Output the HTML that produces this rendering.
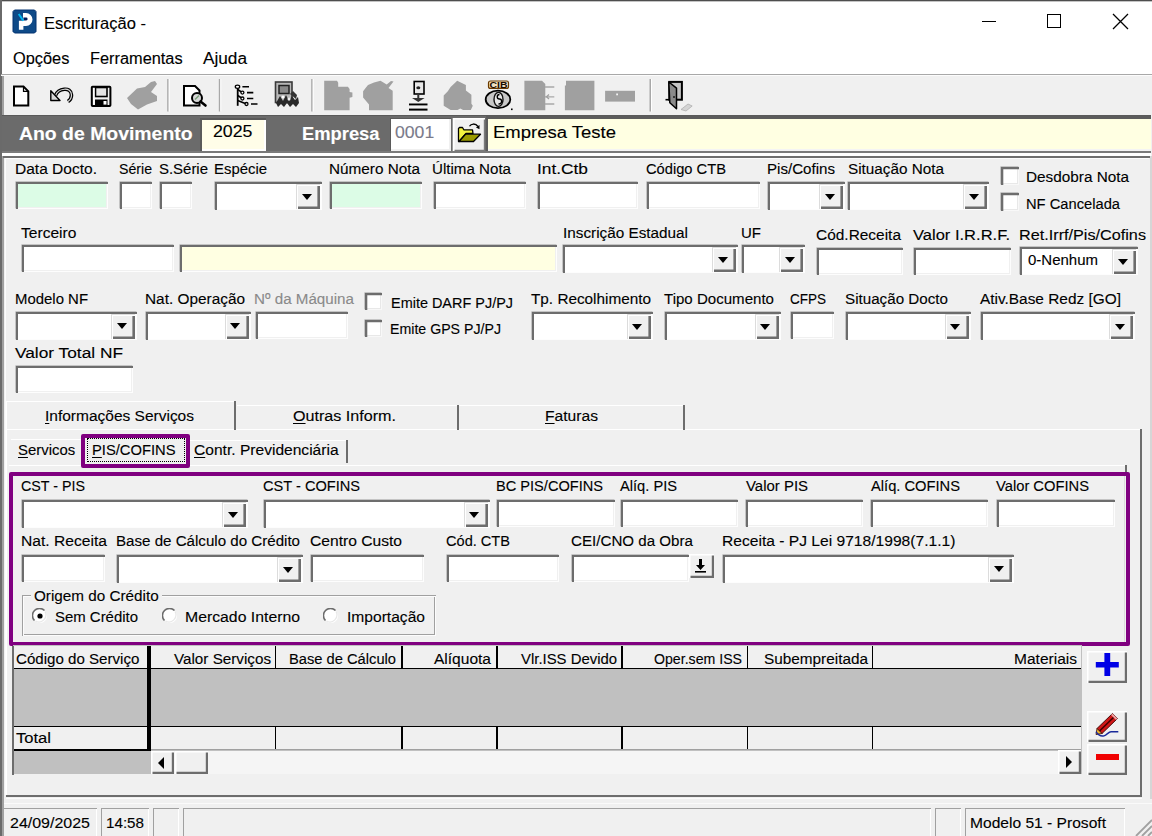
<!DOCTYPE html>
<html><head><meta charset="utf-8"><style>
html,body{margin:0;padding:0;width:1152px;height:836px;overflow:hidden;background:#f0f0f0;position:relative;font-family:"Liberation Sans", sans-serif}
.a{position:absolute}
.t{position:absolute;white-space:nowrap;line-height:1;transform-origin:0 0;font-family:"Liberation Sans", sans-serif;-webkit-text-stroke:0.12px currentColor}
u{text-decoration:underline;text-underline-offset:2px}
</style></head><body>
<div class="a" style="left:0px;top:0px;width:1152px;height:74px;background:#fff"></div>
<div class="a" style="left:0px;top:0px;width:1152px;height:1px;background:#4e4e4e"></div>
<div class="a" style="left:0px;top:1px;width:1152px;height:1px;background:#c4c4c4"></div>
<div class="a" style="left:0px;top:0px;width:2px;height:836px;background:#6a6a6a"></div>
<div class="a" style="left:2px;top:75px;width:2px;height:761px;background:#a0a0a0"></div>
<div class="a" style="left:1px;top:74px;width:1151px;height:1px;background:#a8a8a8"></div>
<div class="a" style="left:1px;top:75px;width:1151px;height:1px;background:#fcfcfc"></div>
<svg class="a" style="left:0;top:0" width="40" height="40" viewBox="0 0 40 40">
<path d="M14.5 10H34.5L36 11.5V31.5L34.5 33H14.5L13 31.5V11.5Z" fill="#0e4a88" stroke="#033270" stroke-width="1"/>
<path d="M23 13H26A6.5 6.5 0 0 1 26 26H23.4V29.8H18.9V20.8H23Z" fill="#fff"/>
<path d="M23.4 17.6H26.2A1.4 1.4 0 0 1 26.2 20.4H23.4Z" fill="#001a5a"/>
<path d="M18.7 14L23.4 20.7" stroke="#00b8f0" stroke-width="2"/>
</svg>
<span class="t" style="left:44px;top:14.53px;font-size:16.5px;color:#000;transform:scaleX(1.0021);">Escrituração -</span>
<div class="a" style="left:982px;top:21px;width:14px;height:1.2px;background:#000"></div>
<div class="a" style="left:1047px;top:14px;width:14px;height:14px;border:1.2px solid #000;box-sizing:border-box"></div>
<svg class="a" style="left:1112px;top:13px" width="17" height="17" viewBox="0 0 17 17"><path d="M1 1L16 16M16 1L1 16" stroke="#000" stroke-width="1.3"/></svg>
<span class="t" style="left:12.5px;top:50.66px;font-size:16px;color:#000;transform:scaleX(1.0228);">Opções</span>
<span class="t" style="left:89.8px;top:50.66px;font-size:16px;color:#000;transform:scaleX(1.0209);">Ferramentas</span>
<span class="t" style="left:203px;top:50.66px;font-size:16px;color:#000;transform:scaleX(1.0752);">Ajuda</span>
<svg class="a" style="left:0;top:76px" width="720" height="40" viewBox="0 76 720 40">
<!-- new doc -->
<path d="M14 86.5h9.5l4.8 4.8V105.5H14z" fill="#fff" stroke="#000" stroke-width="2"/>
<path d="M23.5 86.5v4.8h4.8" fill="none" stroke="#000" stroke-width="1.2"/>
<!-- undo -->
<path d="M55.5 95.5 C58 88.5 71 86 71.5 95 C71.5 98 69.5 100.5 68 101.5" stroke="#000" stroke-width="3.6" fill="none"/>
<path d="M55.5 95.5 C58 88.5 71 86 71.5 95 C71.5 98 69.5 100.5 68 101.5" stroke="#dcdcdc" stroke-width="1.2" fill="none"/>
<path d="M50.8 90.8 V100.5 H60 Z" fill="#d8d8d8" stroke="#000" stroke-width="1.4" stroke-linejoin="round"/>
<!-- save -->
<rect x="91.8" y="86.8" width="18.6" height="19.2" rx="0.8" fill="#f0f0f0" stroke="#000" stroke-width="2"/>
<rect x="95.5" y="87.5" width="11.5" height="9" fill="#e4e4e4" stroke="#000" stroke-width="1.6"/>
<rect x="95" y="99.5" width="12.5" height="6" fill="#000"/>
<rect x="103.5" y="101" width="3" height="3.6" fill="#fff"/>
<rect x="93" y="88" width="1.5" height="16.5" fill="#fff"/>
<!-- gray brush -->
<path d="M127 98 L137 88.5 L145 87 L151 82 L155 81 L157 84 L151 92 L157 96 L157 101 L147 104.5 L138 109.5 L131 104 Z" fill="#a0a0a0"/>
<!-- separators -->
<rect x="167.2" y="79" width="1.5" height="32.5" fill="#a8a8a8"/><rect x="168.7" y="79" width="1" height="32.5" fill="#fff"/>
<rect x="218.8" y="79" width="1.5" height="32.5" fill="#a8a8a8"/><rect x="220.3" y="79" width="1" height="32.5" fill="#fff"/>
<rect x="311.2" y="79" width="1.5" height="32.5" fill="#a8a8a8"/><rect x="312.7" y="79" width="1" height="32.5" fill="#fff"/>
<rect x="649.5" y="79" width="1.5" height="32.5" fill="#a8a8a8"/><rect x="651" y="79" width="1" height="32.5" fill="#fff"/>
<!-- print preview -->
<path d="M184 86h11l4.5 4.5V105.5H184z" fill="#fff" stroke="#000" stroke-width="2"/>
<circle cx="197" cy="98" r="5" fill="#d8d8d8" stroke="#000" stroke-width="2"/>
<path d="M195 99.5 l4-4" stroke="#7aa07a" stroke-width="1.5"/>
<path d="M200.5 101.5l5 4" stroke="#000" stroke-width="2.6" stroke-linecap="round"/>
<!-- tree -->
<path d="M237.7 87v18.8" stroke="#000" stroke-width="1.8"/>
<path d="M237.7 89.5L242.4 92.6M237.7 95.5L242.4 98.5M237.7 100.5L246.5 104" stroke="#000" stroke-width="1.6" fill="none"/>
<ellipse cx="237.5" cy="86.7" rx="2.2" ry="1.6" fill="#fff" stroke="#000" stroke-width="1.3"/>
<circle cx="242.4" cy="92.6" r="1.5" fill="#fff" stroke="#000" stroke-width="1.3"/>
<circle cx="242.4" cy="98.5" r="1.5" fill="#fff" stroke="#000" stroke-width="1.3"/>
<circle cx="246.5" cy="104" r="1.5" fill="#fff" stroke="#000" stroke-width="1.3"/>
<path d="M242.4 86.7h6.6M247 92.6h6.3M247 98.5h6.3M251 104h6.5" stroke="#000" stroke-width="1.6"/>
<!-- multi dark icon -->
<rect x="275.5" y="82" width="16.5" height="20.5" fill="#b8b8b8" stroke="#3a3a3a" stroke-width="1.6"/>
<rect x="279" y="85.5" width="10" height="8" fill="#8a8a8a" stroke="#222" stroke-width="1.5"/>
<path d="M276 103l4-7 3 5 3-6 3 6 3-5 3 4 3-3 1 6-3 4-3-3-3 3-3-4-3 4-3-3-3 3z" fill="#2a2a2a"/>
<path d="M290 94l3-3 4 4-1 4" fill="#333"/>
<circle cx="283" cy="97" r="1.5" fill="#fff"/><circle cx="289" cy="99" r="1.5" fill="#eee"/>
<!-- gray folder-like -->
<path d="M324.2 80.8H337l1.2 2v3.9h9.7l1.7 2.4v2.8l2.8 0.5v4.5l-2.8 0.8v12.6H324.2z" fill="#a0a0a0"/>
<!-- gray apple -->
<path d="M363.1 91.2 L365.2 88.4 L368 85 L374 82.5 L380.5 80.8 L386.7 84.6 L391 81 L393.5 81.5 L388.5 88 L392.7 90.8 V110.3 H369 V104.4 L363.1 97.4 Z" fill="#a0a0a0"/>
<!-- download icon -->
<rect x="414.2" y="81.5" width="9.8" height="12.5" fill="#e8e8e8" stroke="#000" stroke-width="1.6"/>
<ellipse cx="418.3" cy="87.7" rx="2" ry="1.5" fill="#222"/>
<path d="M417.3 94h2v4h5.3l-6.3 4-6.3-4h5.3z" fill="#333"/>
<rect x="409" y="103.5" width="18.5" height="1.9" fill="#000"/>
<rect x="409" y="108.6" width="18.5" height="2" fill="#000"/>
<!-- gray club -->
<path d="M457.2 80.8 L465.9 85 V90.5 L471.4 94.7 V103.7 L472.8 105.8 L470.8 110 H463.1 L460.3 108.6 L457.6 110 H450.6 L443.7 105.8 V95.4 L447.8 91.2 L450.6 87 Z" fill="#a0a0a0"/>
<!-- CIB coin -->
<rect x="488.5" y="81" width="20" height="7.4" rx="2" fill="#f0e0c0" stroke="#6a3a00" stroke-width="1.2"/>
<text x="498.5" y="88.2" font-family="Liberation Sans" font-weight="bold" font-size="8.5" fill="#1a0a00" text-anchor="middle" textLength="18" lengthAdjust="spacingAndGlyphs">CIB</text>
<ellipse cx="498" cy="99.4" rx="12.3" ry="8.8" fill="#c8c8c8" stroke="#000" stroke-width="1.8"/>
<ellipse cx="498.5" cy="99.4" rx="4.5" ry="7" fill="#e6e6e6" stroke="#111" stroke-width="1.4"/>
<path d="M499.5 94.5c-3 0-3 4.5 0 4.5s3 5-1 5" stroke="#000" stroke-width="1.4" fill="none"/>
<rect x="511" y="108.5" width="1.6" height="1.6" fill="#000"/>
<!-- gray doc with arrows -->
<path d="M524.4 80.8H542l3.3 3.3V110.3H524.4z" fill="#a0a0a0"/>
<path d="M545 87h9.3M545 96.8h9.3M545 104h9.3" stroke="#a8a8a8" stroke-width="1.3"/>
<path d="M549 94.5l-2.5 2.3 2.5 2.3" stroke="#a0a0a0" stroke-width="1.3" fill="none"/>
<!-- gray square -->
<path d="M566 80.8H594.4V110.3H564.9V85.5H566z" fill="#a0a0a0"/>
<!-- gray bar -->
<rect x="605.1" y="90.8" width="29.9" height="10.8" fill="#a0a0a0"/>
<rect x="616.2" y="93.5" width="1.8" height="1.8" fill="#f4f4f4"/>
<!-- door -->
<rect x="669.3" y="81.9" width="12.6" height="17.8" fill="#c4c4c4" stroke="#000" stroke-width="2"/>
<path d="M665.5 99.7h3.5" stroke="#000" stroke-width="1.6"/>
<path d="M668.8 82 L676.5 88.2 V108.8 L669.8 102.7 Z" fill="#8a8a8a" stroke="#000" stroke-width="1.5" stroke-linejoin="round"/>
<path d="M674 96v2" stroke="#000" stroke-width="1.2"/>
<path d="M681 109.5 L688 104 L692.2 106 L686 111 Z" fill="#d4d4d4" stroke="#b0b0b0" stroke-width="0.8"/>
</svg>

<div class="a" style="left:2px;top:115px;width:1149px;height:37px;background:#6b6b6b;"></div>
<div class="a" style="left:2px;top:115px;width:1149px;height:1px;background:#5a5a5a;"></div>
<div class="a" style="left:2px;top:152px;width:1150px;height:1px;background:#f0f0f0"></div>
<span class="t" style="left:19.2px;top:125.69px;font-size:17.5px;color:#fff;font-weight:bold;transform:scaleX(1.1090);">Ano de Movimento</span>
<div class="a" style="left:200px;top:118px;width:66px;height:33px;background:#fffde8;box-shadow:inset 2px 2px #5a5a5a,inset -2px -2px #fff;"></div>
<span class="t" style="left:213.3px;top:122.96px;font-size:17.3px;color:#000;transform:scaleX(1.0272);">2025</span>
<span class="t" style="left:301.8px;top:125.69px;font-size:17.5px;color:#fff;font-weight:bold;transform:scaleX(1.0482);">Empresa</span>
<div class="a" style="left:390px;top:118px;width:61px;height:33px;background:#fff;box-shadow:inset 1px 1px #5a5a5a,inset -2px -2px #f0f0f0;"></div>
<span class="t" style="left:394.8px;top:124.36px;font-size:17.3px;color:#7a7a8a;transform:scaleX(1.0194);">0001</span>
<div class="a" style="left:453px;top:118px;width:31.5px;height:33px;background:#f0f0f0;box-shadow:inset 1.5px 1.5px #fff,inset -1.2px -1.2px #7a7a7a,-1px 0 #9a9a9a"></div>
<svg class="a" style="left:440px;top:110px" width="50" height="45" viewBox="440 110 50 45">
<path d="M458.5 128.5L459.5 127.5H462.5L463.8 129.8H472.5L473 133.5L466 133.5L459 141.5H458.5Z" fill="#f4f440" stroke="#000" stroke-width="1.3" stroke-linejoin="round"/>
<path d="M459 141.5L465.5 134.2H480.5L473.5 141.5Z" fill="#9a9a00" stroke="#000" stroke-width="1.3" stroke-linejoin="round"/>
<path d="M469.5 126.2C471 123.5 475.5 123 478 126.5" fill="none" stroke="#000" stroke-width="1.3"/>
<path d="M476 127.5L479.5 125L479.5 129.2Z" fill="#000"/>
</svg>
<div class="a" style="left:486px;top:116px;width:665px;height:35px;background:#ffffe2;box-shadow:inset 0 3px #5c5c5c,inset 2px 0 #5c5c5c,inset 0 -2px #f4f4f4;"></div>
<span class="t" style="left:493px;top:123.86px;font-size:17.3px;color:#000;transform:scaleX(1.0700);">Empresa Teste</span>
<div class="a" style="left:2px;top:151px;width:1149px;height:2px;background:#7a7a7a"></div>
<div class="a" style="left:2px;top:153px;width:1149px;height:3px;background:#fff"></div>
<div class="a" style="left:3px;top:156px;width:1148px;height:2px;background:#6e6e6e"></div>
<div class="a" style="left:5px;top:158px;width:1144px;height:1px;background:#fcfcfc"></div>
<div class="a" style="left:5px;top:158px;width:1px;height:637px;background:#fcfcfc"></div>
<div class="a" style="left:1150px;top:156px;width:1.5px;height:645px;background:#d6d6d6"></div>
<span class="t" style="left:14.5px;top:160.68px;font-size:15.5px;color:#000;transform:scaleX(1.0017);">Data Docto.</span>
<div class="a" style="left:16px;top:182px;width:92px;height:27px;background:#dcfce6;box-shadow:inset 2px 2px #6d6d6d,inset -1px -1px #fdfdfd,inset -2px -2px #f0f0f0,-0.6px -0.6px #a8a8a8;"></div>
<span class="t" style="left:118.9px;top:160.68px;font-size:15.5px;color:#000;transform:scaleX(0.9119);">Série</span>
<div class="a" style="left:119.6px;top:182px;width:32px;height:27px;background:#fff;box-shadow:inset 2px 2px #6d6d6d,inset -1px -1px #fdfdfd,inset -2px -2px #f0f0f0,-0.6px -0.6px #a8a8a8;"></div>
<span class="t" style="left:158.7px;top:160.68px;font-size:15.5px;color:#000;transform:scaleX(0.9637);">S.Série</span>
<div class="a" style="left:160px;top:182px;width:32px;height:27px;background:#fff;box-shadow:inset 2px 2px #6d6d6d,inset -1px -1px #fdfdfd,inset -2px -2px #f0f0f0,-0.6px -0.6px #a8a8a8;"></div>
<span class="t" style="left:213.6px;top:160.68px;font-size:15.5px;color:#000;transform:scaleX(0.9609);">Espécie</span>
<div class="a" style="left:215px;top:182px;width:107px;height:28px;background:#fff;box-shadow:inset 2px 2px #6d6d6d,inset -2px -1px #fdfdfd,-0.6px -0.6px #a8a8a8;"></div>
<div class="a" style="left:296px;top:184px;width:24px;height:25px;background:#f0f0f0;box-shadow:inset 1px 1px #dcdcdc,inset 2px 2px #fff,inset -2.6px -2.6px #6d6d6d;"></div>
<div class="a" style="left:301.5px;top:193.5px;width:0;height:0;border-left:5.5px solid transparent;border-right:5.5px solid transparent;border-top:6px solid #000"></div>
<span class="t" style="left:329px;top:160.68px;font-size:15.5px;color:#000;transform:scaleX(0.9871);">Número Nota</span>
<div class="a" style="left:330px;top:182px;width:92px;height:27px;background:#dcfce6;box-shadow:inset 2px 2px #6d6d6d,inset -1px -1px #fdfdfd,inset -2px -2px #f0f0f0,-0.6px -0.6px #a8a8a8;"></div>
<span class="t" style="left:432.4px;top:160.68px;font-size:15.5px;color:#000;transform:scaleX(0.9757);">Última Nota</span>
<div class="a" style="left:434px;top:182px;width:92px;height:27px;background:#fff;box-shadow:inset 2px 2px #6d6d6d,inset -1px -1px #fdfdfd,inset -2px -2px #f0f0f0,-0.6px -0.6px #a8a8a8;"></div>
<span class="t" style="left:537px;top:160.68px;font-size:15.5px;color:#000;transform:scaleX(1.1167);">Int.Ctb</span>
<div class="a" style="left:537.5px;top:182px;width:100px;height:27px;background:#fff;box-shadow:inset 2px 2px #6d6d6d,inset -1px -1px #fdfdfd,inset -2px -2px #f0f0f0,-0.6px -0.6px #a8a8a8;"></div>
<span class="t" style="left:646px;top:160.68px;font-size:15.5px;color:#000;transform:scaleX(0.9474);">Código CTB</span>
<div class="a" style="left:647px;top:182px;width:113px;height:27px;background:#fff;box-shadow:inset 2px 2px #6d6d6d,inset -1px -1px #fdfdfd,inset -2px -2px #f0f0f0,-0.6px -0.6px #a8a8a8;"></div>
<span class="t" style="left:766.5px;top:160.68px;font-size:15.5px;color:#000;transform:scaleX(0.9745);">Pis/Cofins</span>
<div class="a" style="left:768px;top:182px;width:77px;height:28px;background:#fff;box-shadow:inset 2px 2px #6d6d6d,inset -2px -1px #fdfdfd,-0.6px -0.6px #a8a8a8;"></div>
<div class="a" style="left:819px;top:184px;width:24px;height:25px;background:#f0f0f0;box-shadow:inset 1px 1px #dcdcdc,inset 2px 2px #fff,inset -2.6px -2.6px #6d6d6d;"></div>
<div class="a" style="left:824.5px;top:193.5px;width:0;height:0;border-left:5.5px solid transparent;border-right:5.5px solid transparent;border-top:6px solid #000"></div>
<span class="t" style="left:847.6px;top:160.68px;font-size:15.5px;color:#000;transform:scaleX(0.9859);">Situação Nota</span>
<div class="a" style="left:848px;top:182px;width:141px;height:28px;background:#fff;box-shadow:inset 2px 2px #6d6d6d,inset -2px -1px #fdfdfd,-0.6px -0.6px #a8a8a8;"></div>
<div class="a" style="left:963px;top:184px;width:24px;height:25px;background:#f0f0f0;box-shadow:inset 1px 1px #dcdcdc,inset 2px 2px #fff,inset -2.6px -2.6px #6d6d6d;"></div>
<div class="a" style="left:968.5px;top:193.5px;width:0;height:0;border-left:5.5px solid transparent;border-right:5.5px solid transparent;border-top:6px solid #000"></div>
<div class="a" style="left:1001px;top:167px;width:18px;height:18px;background:#fff;box-shadow:inset 2.3px 2.3px #6d6d6d,inset -1px -1px #f8f8f8,inset -2px -2px #e8e8e8,-0.6px -0.6px #a8a8a8;"></div>
<span class="t" style="left:1026.4px;top:169.48px;font-size:15.5px;color:#000;transform:scaleX(0.9879);">Desdobra Nota</span>
<div class="a" style="left:1001px;top:193px;width:18px;height:18px;background:#fff;box-shadow:inset 2.3px 2.3px #6d6d6d,inset -1px -1px #f8f8f8,inset -2px -2px #e8e8e8,-0.6px -0.6px #a8a8a8;"></div>
<span class="t" style="left:1026.4px;top:195.58px;font-size:15.5px;color:#000;transform:scaleX(0.9487);">NF Cancelada</span>
<span class="t" style="left:21.4px;top:224.88px;font-size:15.5px;color:#000;transform:scaleX(1.0047);">Terceiro</span>
<div class="a" style="left:22px;top:245px;width:152px;height:27px;background:#fff;box-shadow:inset 2px 2px #6d6d6d,inset -1px -1px #fdfdfd,inset -2px -2px #f0f0f0,-0.6px -0.6px #a8a8a8;"></div>
<div class="a" style="left:180px;top:245px;width:377px;height:27px;background:#ffffe2;box-shadow:inset 2px 2px #6d6d6d,inset -1px -1px #fdfdfd,inset -2px -2px #f0f0f0,-0.6px -0.6px #a8a8a8;"></div>
<span class="t" style="left:562.7px;top:224.88px;font-size:15.5px;color:#000;transform:scaleX(0.9869);">Inscrição Estadual</span>
<div class="a" style="left:563px;top:245px;width:175px;height:28px;background:#fff;box-shadow:inset 2px 2px #6d6d6d,inset -2px -1px #fdfdfd,-0.6px -0.6px #a8a8a8;"></div>
<div class="a" style="left:712px;top:247px;width:24px;height:25px;background:#f0f0f0;box-shadow:inset 1px 1px #dcdcdc,inset 2px 2px #fff,inset -2.6px -2.6px #6d6d6d;"></div>
<div class="a" style="left:717.5px;top:256.5px;width:0;height:0;border-left:5.5px solid transparent;border-right:5.5px solid transparent;border-top:6px solid #000"></div>
<span class="t" style="left:741px;top:224.88px;font-size:15.5px;color:#000;transform:scaleX(0.9675);">UF</span>
<div class="a" style="left:742px;top:245px;width:63px;height:28px;background:#fff;box-shadow:inset 2px 2px #6d6d6d,inset -2px -1px #fdfdfd,-0.6px -0.6px #a8a8a8;"></div>
<div class="a" style="left:779px;top:247px;width:24px;height:25px;background:#f0f0f0;box-shadow:inset 1px 1px #dcdcdc,inset 2px 2px #fff,inset -2.6px -2.6px #6d6d6d;"></div>
<div class="a" style="left:784.5px;top:256.5px;width:0;height:0;border-left:5.5px solid transparent;border-right:5.5px solid transparent;border-top:6px solid #000"></div>
<span class="t" style="left:816px;top:226.88px;font-size:15.5px;color:#000;transform:scaleX(0.9965);">Cód.Receita</span>
<div class="a" style="left:816.8px;top:248px;width:86px;height:27px;background:#fff;box-shadow:inset 2px 2px #6d6d6d,inset -1px -1px #fdfdfd,inset -2px -2px #f0f0f0,-0.6px -0.6px #a8a8a8;"></div>
<span class="t" style="left:913px;top:226.88px;font-size:15.5px;color:#000;transform:scaleX(1.0658);">Valor I.R.R.F.</span>
<div class="a" style="left:913.8px;top:248px;width:97px;height:27px;background:#fff;box-shadow:inset 2px 2px #6d6d6d,inset -1px -1px #fdfdfd,inset -2px -2px #f0f0f0,-0.6px -0.6px #a8a8a8;"></div>
<span class="t" style="left:1018.6px;top:226.88px;font-size:15.5px;color:#000;transform:scaleX(1.0457);">Ret.Irrf/Pis/Cofins</span>
<div class="a" style="left:1020px;top:247px;width:118px;height:28px;background:#fff;box-shadow:inset 2px 2px #6d6d6d,inset -2px -1px #fdfdfd,-0.6px -0.6px #a8a8a8;"></div>
<div class="a" style="left:1112px;top:249px;width:24px;height:25px;background:#f0f0f0;box-shadow:inset 1px 1px #dcdcdc,inset 2px 2px #fff,inset -2.6px -2.6px #6d6d6d;"></div>
<div class="a" style="left:1117.5px;top:258.5px;width:0;height:0;border-left:5.5px solid transparent;border-right:5.5px solid transparent;border-top:6px solid #000"></div>
<span class="t" style="left:1027.8px;top:252.38px;font-size:15.5px;color:#000;transform:scaleX(0.9672);">0-Nenhum</span>
<span class="t" style="left:15px;top:290.88px;font-size:15.5px;color:#000;transform:scaleX(0.9629);">Modelo NF</span>
<div class="a" style="left:16px;top:311.5px;width:121px;height:28px;background:#fff;box-shadow:inset 2px 2px #6d6d6d,inset -2px -1px #fdfdfd,-0.6px -0.6px #a8a8a8;"></div>
<div class="a" style="left:111px;top:313.5px;width:24px;height:25px;background:#f0f0f0;box-shadow:inset 1px 1px #dcdcdc,inset 2px 2px #fff,inset -2.6px -2.6px #6d6d6d;"></div>
<div class="a" style="left:116.5px;top:323.0px;width:0;height:0;border-left:5.5px solid transparent;border-right:5.5px solid transparent;border-top:6px solid #000"></div>
<span class="t" style="left:144.8px;top:290.88px;font-size:15.5px;color:#000;transform:scaleX(0.9919);">Nat. Operação</span>
<div class="a" style="left:145.5px;top:311.5px;width:105px;height:28px;background:#fff;box-shadow:inset 2px 2px #6d6d6d,inset -2px -1px #fdfdfd,-0.6px -0.6px #a8a8a8;"></div>
<div class="a" style="left:224.5px;top:313.5px;width:24px;height:25px;background:#f0f0f0;box-shadow:inset 1px 1px #dcdcdc,inset 2px 2px #fff,inset -2.6px -2.6px #6d6d6d;"></div>
<div class="a" style="left:230.0px;top:323.0px;width:0;height:0;border-left:5.5px solid transparent;border-right:5.5px solid transparent;border-top:6px solid #000"></div>
<span class="t" style="left:254.4px;top:290.88px;font-size:15.5px;color:#8a8a8a;transform:scaleX(0.9787);">Nº da Máquina</span>
<div class="a" style="left:255.5px;top:311.5px;width:92px;height:27px;background:#fff;box-shadow:inset 2px 2px #6d6d6d,inset -1px -1px #fdfdfd,inset -2px -2px #f0f0f0,-0.6px -0.6px #a8a8a8;"></div>
<div class="a" style="left:365px;top:293px;width:17px;height:17px;background:#fff;box-shadow:inset 2.3px 2.3px #6d6d6d,inset -1px -1px #f8f8f8,inset -2px -2px #e8e8e8,-0.6px -0.6px #a8a8a8;"></div>
<span class="t" style="left:391px;top:295.08px;font-size:15.5px;color:#000;transform:scaleX(0.9319);">Emite DARF PJ/PJ</span>
<div class="a" style="left:365px;top:320px;width:17px;height:17px;background:#fff;box-shadow:inset 2.3px 2.3px #6d6d6d,inset -1px -1px #f8f8f8,inset -2px -2px #e8e8e8,-0.6px -0.6px #a8a8a8;"></div>
<span class="t" style="left:390px;top:320.88px;font-size:15.5px;color:#000;transform:scaleX(0.9139);">Emite GPS PJ/PJ</span>
<span class="t" style="left:531px;top:290.88px;font-size:15.5px;color:#000;transform:scaleX(0.9878);">Tp. Recolhimento</span>
<div class="a" style="left:531.5px;top:312px;width:121px;height:28px;background:#fff;box-shadow:inset 2px 2px #6d6d6d,inset -2px -1px #fdfdfd,-0.6px -0.6px #a8a8a8;"></div>
<div class="a" style="left:626.5px;top:314px;width:24px;height:25px;background:#f0f0f0;box-shadow:inset 1px 1px #dcdcdc,inset 2px 2px #fff,inset -2.6px -2.6px #6d6d6d;"></div>
<div class="a" style="left:632.0px;top:323.5px;width:0;height:0;border-left:5.5px solid transparent;border-right:5.5px solid transparent;border-top:6px solid #000"></div>
<span class="t" style="left:663.9px;top:290.88px;font-size:15.5px;color:#000;transform:scaleX(0.9721);">Tipo Documento</span>
<div class="a" style="left:664.5px;top:312px;width:116px;height:28px;background:#fff;box-shadow:inset 2px 2px #6d6d6d,inset -2px -1px #fdfdfd,-0.6px -0.6px #a8a8a8;"></div>
<div class="a" style="left:754.5px;top:314px;width:24px;height:25px;background:#f0f0f0;box-shadow:inset 1px 1px #dcdcdc,inset 2px 2px #fff,inset -2.6px -2.6px #6d6d6d;"></div>
<div class="a" style="left:760.0px;top:323.5px;width:0;height:0;border-left:5.5px solid transparent;border-right:5.5px solid transparent;border-top:6px solid #000"></div>
<span class="t" style="left:790px;top:290.88px;font-size:15.5px;color:#000;transform:scaleX(0.8707);">CFPS</span>
<div class="a" style="left:791px;top:312px;width:43px;height:27px;background:#fff;box-shadow:inset 2px 2px #6d6d6d,inset -1px -1px #fdfdfd,inset -2px -2px #f0f0f0,-0.6px -0.6px #a8a8a8;"></div>
<span class="t" style="left:844.5px;top:290.88px;font-size:15.5px;color:#000;transform:scaleX(0.9798);">Situação Docto</span>
<div class="a" style="left:845.5px;top:312px;width:125px;height:28px;background:#fff;box-shadow:inset 2px 2px #6d6d6d,inset -2px -1px #fdfdfd,-0.6px -0.6px #a8a8a8;"></div>
<div class="a" style="left:944.5px;top:314px;width:24px;height:25px;background:#f0f0f0;box-shadow:inset 1px 1px #dcdcdc,inset 2px 2px #fff,inset -2.6px -2.6px #6d6d6d;"></div>
<div class="a" style="left:950.0px;top:323.5px;width:0;height:0;border-left:5.5px solid transparent;border-right:5.5px solid transparent;border-top:6px solid #000"></div>
<span class="t" style="left:980.3px;top:290.88px;font-size:15.5px;color:#000;transform:scaleX(0.9939);">Ativ.Base Redz [GO]</span>
<div class="a" style="left:981px;top:312px;width:154px;height:28px;background:#fff;box-shadow:inset 2px 2px #6d6d6d,inset -2px -1px #fdfdfd,-0.6px -0.6px #a8a8a8;"></div>
<div class="a" style="left:1109px;top:314px;width:24px;height:25px;background:#f0f0f0;box-shadow:inset 1px 1px #dcdcdc,inset 2px 2px #fff,inset -2.6px -2.6px #6d6d6d;"></div>
<div class="a" style="left:1114.5px;top:323.5px;width:0;height:0;border-left:5.5px solid transparent;border-right:5.5px solid transparent;border-top:6px solid #000"></div>
<span class="t" style="left:15px;top:344.88px;font-size:15.5px;color:#000;transform:scaleX(1.1159);">Valor Total NF</span>
<div class="a" style="left:16.4px;top:366px;width:117px;height:27px;background:#fff;box-shadow:inset 2px 2px #6d6d6d,inset -1px -1px #fdfdfd,inset -2px -2px #f0f0f0,-0.6px -0.6px #a8a8a8;"></div>
<div class="a" style="left:6px;top:429px;width:1136px;height:1px;background:#fff"></div>
<div class="a" style="left:6px;top:429px;width:1px;height:366px;background:#fff"></div>
<div class="a" style="left:1140px;top:429px;width:2px;height:368px;background:#6d6d6d"></div>
<div class="a" style="left:6px;top:795px;width:1136px;height:2px;background:#6d6d6d"></div>
<div class="a" style="left:6px;top:797.5px;width:1136px;height:1px;background:#fcfcfc"></div>
<div class="a" style="left:6px;top:401px;width:230px;height:1px;background:#fff"></div>
<div class="a" style="left:6px;top:401px;width:1px;height:29px;background:#fff"></div>
<div class="a" style="left:234px;top:401px;width:2px;height:29px;background:#6d6d6d"></div>
<span class="t" style="left:45.3px;top:408.13px;font-size:15.5px;color:#000;transform:scaleX(0.9997);"><u>I</u>nformações Serviços</span>
<div class="a" style="left:237px;top:405px;width:221px;height:1px;background:#fff"></div>
<div class="a" style="left:457px;top:405px;width:2px;height:25px;background:#6d6d6d"></div>
<span class="t" style="left:293px;top:408.13px;font-size:15.5px;color:#000;transform:scaleX(1.0397);"><u>O</u>utras Inform.</span>
<div class="a" style="left:459px;top:405px;width:226px;height:1px;background:#fff"></div>
<div class="a" style="left:683px;top:405px;width:2px;height:25px;background:#6d6d6d"></div>
<span class="t" style="left:544.6px;top:408.13px;font-size:15.5px;color:#000;transform:scaleX(1.0083);"><u>F</u>aturas</span>
<div class="a" style="left:9px;top:465px;width:1118px;height:1px;background:#fff"></div>
<div class="a" style="left:1125px;top:465px;width:2px;height:10px;background:#6d6d6d"></div>
<div class="a" style="left:1123.5px;top:476px;width:1px;height:166px;background:#dadada"></div>
<div class="a" style="left:11px;top:439px;width:70px;height:1px;background:#fff"></div>
<span class="t" style="left:17.8px;top:442.48px;font-size:15.5px;color:#000;transform:scaleX(0.9621);"><u>S</u>ervicos</span>
<div class="a" style="left:190px;top:440px;width:157px;height:1px;background:#fff"></div>
<div class="a" style="left:346px;top:440px;width:2px;height:23px;background:#6d6d6d"></div>
<span class="t" style="left:193.75px;top:442.28px;font-size:15.5px;color:#000;transform:scaleX(1.0049);"><u>C</u>ontr. Previdenciária</span>
<div class="a" style="left:81px;top:433.5px;width:109px;height:34px;border:4px solid #800080;box-sizing:border-box;border-radius:2px"></div>
<div class="a" style="left:87px;top:438px;width:98px;height:24px;border:1px dotted #000;box-sizing:border-box"></div>
<span class="t" style="left:92px;top:442.28px;font-size:15.5px;color:#000;transform:scaleX(0.9515);"><u>P</u>IS/COFINS</span>
<div class="a" style="left:9px;top:472px;width:1121.3px;height:173.5px;border:4px solid #800080;box-sizing:border-box;border-radius:2px"></div>
<span class="t" style="left:21.4px;top:478.28px;font-size:15.5px;color:#000;transform:scaleX(0.9211);">CST - PIS</span>
<div class="a" style="left:22px;top:500px;width:226px;height:28px;background:#fff;box-shadow:inset 2px 2px #6d6d6d,inset -2px -1px #fdfdfd,-0.6px -0.6px #a8a8a8;"></div>
<div class="a" style="left:222px;top:502px;width:24px;height:25px;background:#f0f0f0;box-shadow:inset 1px 1px #dcdcdc,inset 2px 2px #fff,inset -2.6px -2.6px #6d6d6d;"></div>
<div class="a" style="left:227.5px;top:511.5px;width:0;height:0;border-left:5.5px solid transparent;border-right:5.5px solid transparent;border-top:6px solid #000"></div>
<span class="t" style="left:262.9px;top:478.28px;font-size:15.5px;color:#000;transform:scaleX(0.9412);">CST - COFINS</span>
<div class="a" style="left:263.5px;top:500px;width:226px;height:28px;background:#fff;box-shadow:inset 2px 2px #6d6d6d,inset -2px -1px #fdfdfd,-0.6px -0.6px #a8a8a8;"></div>
<div class="a" style="left:463.5px;top:502px;width:24px;height:25px;background:#f0f0f0;box-shadow:inset 1px 1px #dcdcdc,inset 2px 2px #fff,inset -2.6px -2.6px #6d6d6d;"></div>
<div class="a" style="left:469.0px;top:511.5px;width:0;height:0;border-left:5.5px solid transparent;border-right:5.5px solid transparent;border-top:6px solid #000"></div>
<span class="t" style="left:496px;top:478.28px;font-size:15.5px;color:#000;transform:scaleX(0.9412);">BC PIS/COFINS</span>
<div class="a" style="left:497px;top:500px;width:118px;height:27px;background:#fff;box-shadow:inset 2px 2px #6d6d6d,inset -1px -1px #fdfdfd,inset -2px -2px #f0f0f0,-0.6px -0.6px #a8a8a8;"></div>
<span class="t" style="left:620.3px;top:478.28px;font-size:15.5px;color:#000;transform:scaleX(0.9451);">Alíq. PIS</span>
<div class="a" style="left:620.8px;top:500px;width:117px;height:27px;background:#fff;box-shadow:inset 2px 2px #6d6d6d,inset -1px -1px #fdfdfd,inset -2px -2px #f0f0f0,-0.6px -0.6px #a8a8a8;"></div>
<span class="t" style="left:745.8px;top:478.28px;font-size:15.5px;color:#000;transform:scaleX(0.9638);">Valor PIS</span>
<div class="a" style="left:746.4px;top:500px;width:117px;height:27px;background:#fff;box-shadow:inset 2px 2px #6d6d6d,inset -1px -1px #fdfdfd,inset -2px -2px #f0f0f0,-0.6px -0.6px #a8a8a8;"></div>
<span class="t" style="left:870.8px;top:478.28px;font-size:15.5px;color:#000;transform:scaleX(0.9479);">Alíq. COFINS</span>
<div class="a" style="left:871.4px;top:500px;width:117px;height:27px;background:#fff;box-shadow:inset 2px 2px #6d6d6d,inset -1px -1px #fdfdfd,inset -2px -2px #f0f0f0,-0.6px -0.6px #a8a8a8;"></div>
<span class="t" style="left:996.4px;top:478.28px;font-size:15.5px;color:#000;transform:scaleX(0.9499);">Valor COFINS</span>
<div class="a" style="left:997px;top:500px;width:118px;height:27px;background:#fff;box-shadow:inset 2px 2px #6d6d6d,inset -1px -1px #fdfdfd,inset -2px -2px #f0f0f0,-0.6px -0.6px #a8a8a8;"></div>
<span class="t" style="left:21.4px;top:533.28px;font-size:15.5px;color:#000;transform:scaleX(1.0082);">Nat. Receita</span>
<div class="a" style="left:22px;top:555px;width:82.5px;height:27px;background:#fff;box-shadow:inset 2px 2px #6d6d6d,inset -1px -1px #fdfdfd,inset -2px -2px #f0f0f0,-0.6px -0.6px #a8a8a8;"></div>
<span class="t" style="left:116.4px;top:533.28px;font-size:15.5px;color:#000;transform:scaleX(0.9751);">Base de Cálculo do Crédito</span>
<div class="a" style="left:117px;top:555px;width:186px;height:28px;background:#fff;box-shadow:inset 2px 2px #6d6d6d,inset -2px -1px #fdfdfd,-0.6px -0.6px #a8a8a8;"></div>
<div class="a" style="left:277px;top:557px;width:24px;height:25px;background:#f0f0f0;box-shadow:inset 1px 1px #dcdcdc,inset 2px 2px #fff,inset -2.6px -2.6px #6d6d6d;"></div>
<div class="a" style="left:282.5px;top:566.5px;width:0;height:0;border-left:5.5px solid transparent;border-right:5.5px solid transparent;border-top:6px solid #000"></div>
<span class="t" style="left:310.3px;top:533.28px;font-size:15.5px;color:#000;transform:scaleX(1.0074);">Centro Custo</span>
<div class="a" style="left:311px;top:555px;width:113px;height:27px;background:#fff;box-shadow:inset 2px 2px #6d6d6d,inset -1px -1px #fdfdfd,inset -2px -2px #f0f0f0,-0.6px -0.6px #a8a8a8;"></div>
<span class="t" style="left:445.8px;top:533.28px;font-size:15.5px;color:#000;transform:scaleX(0.9403);">Cód. CTB</span>
<div class="a" style="left:447px;top:555px;width:112px;height:27px;background:#fff;box-shadow:inset 2px 2px #6d6d6d,inset -1px -1px #fdfdfd,inset -2px -2px #f0f0f0,-0.6px -0.6px #a8a8a8;"></div>
<span class="t" style="left:571.4px;top:533.28px;font-size:15.5px;color:#000;transform:scaleX(0.9767);">CEI/CNO da Obra</span>
<div class="a" style="left:572px;top:555px;width:117px;height:27px;background:#fff;box-shadow:inset 2px 2px #6d6d6d,inset -1px -1px #fdfdfd,inset -2px -2px #f0f0f0,-0.6px -0.6px #a8a8a8;"></div>
<div class="a" style="left:688.5px;top:554px;width:25.5px;height:24px;background:#f0f0f0;box-shadow:inset 1.5px 1.5px #fff,inset -2.2px -2.2px #6d6d6d;"></div>
<svg class="a" style="left:692px;top:557px" width="17" height="17" viewBox="0 0 17 17"><path d="M7 2h3v6h3l-4.5 5L4 8h3z" fill="#000"/><rect x="3" y="14" width="11" height="1.6" fill="#000"/></svg>
<span class="t" style="left:721.6px;top:533.28px;font-size:15.5px;color:#000;transform:scaleX(1.0070);">Receita - PJ Lei 9718/1998(7.1.1)</span>
<div class="a" style="left:723px;top:554.5px;width:291px;height:28.5px;background:#fff;box-shadow:inset 2px 2px #6d6d6d,inset -2px -1px #fdfdfd,-0.6px -0.6px #a8a8a8;"></div>
<div class="a" style="left:988px;top:556.5px;width:24px;height:25.5px;background:#f0f0f0;box-shadow:inset 1px 1px #dcdcdc,inset 2px 2px #fff,inset -2.6px -2.6px #6d6d6d;"></div>
<div class="a" style="left:993.5px;top:566.2px;width:0;height:0;border-left:5.5px solid transparent;border-right:5.5px solid transparent;border-top:6px solid #000"></div>
<div class="a" style="left:22px;top:595px;width:414px;height:41px;box-shadow:inset 1px 1px #a0a0a0,inset 2px 2px #fcfcfc,inset -1px -1px #fcfcfc,inset -2px -2px #a0a0a0"></div>
<div class="a" style="left:31px;top:588px;width:131px;height:14px;background:#f0f0f0"></div>
<span class="t" style="left:34px;top:587.88px;font-size:15.5px;color:#000;transform:scaleX(0.9847);">Origem do Crédito</span>
<svg class="a" style="left:32px;top:607.5px" width="16" height="16" viewBox="0 0 16 16"><circle cx="8" cy="8" r="7" fill="#fff"/><path d="M2.5 12.5A7 7 0 0 1 12.5 2.5" stroke="#6d6d6d" stroke-width="1.6" fill="none"/><path d="M13 3.5A7 7 0 0 1 3.5 13" stroke="#e8e8e8" stroke-width="1.2" fill="none"/><circle cx="8" cy="8" r="2.6" fill="#000"/></svg>
<span class="t" style="left:55.4px;top:608.88px;font-size:15.5px;color:#000;transform:scaleX(0.9634);">Sem Crédito</span>
<svg class="a" style="left:161.5px;top:607.5px" width="16" height="16" viewBox="0 0 16 16"><circle cx="8" cy="8" r="7" fill="#fff"/><path d="M2.5 12.5A7 7 0 0 1 12.5 2.5" stroke="#6d6d6d" stroke-width="1.6" fill="none"/><path d="M13 3.5A7 7 0 0 1 3.5 13" stroke="#e8e8e8" stroke-width="1.2" fill="none"/></svg>
<span class="t" style="left:185px;top:608.88px;font-size:15.5px;color:#000;transform:scaleX(1.0188);">Mercado Interno</span>
<svg class="a" style="left:322.5px;top:607.5px" width="16" height="16" viewBox="0 0 16 16"><circle cx="8" cy="8" r="7" fill="#fff"/><path d="M2.5 12.5A7 7 0 0 1 12.5 2.5" stroke="#6d6d6d" stroke-width="1.6" fill="none"/><path d="M13 3.5A7 7 0 0 1 3.5 13" stroke="#e8e8e8" stroke-width="1.2" fill="none"/></svg>
<span class="t" style="left:346.8px;top:608.88px;font-size:15.5px;color:#000;transform:scaleX(1.0058);">Importação</span>
<div class="a" style="left:12.5px;top:645px;width:1069px;height:129px;background:#c0c0c0"></div>
<div class="a" style="left:12px;top:645.5px;width:2px;height:129px;background:#6d6d6d"></div>
<div class="a" style="left:13.5px;top:645.5px;width:1067.5px;height:23px;background:#f0f0f0"></div>
<div class="a" style="left:13.5px;top:667.5px;width:1067.5px;height:1.5px;background:#000"></div>
<div class="a" style="left:13.5px;top:727px;width:1067.5px;height:22.5px;background:#f0f0f0"></div>
<div class="a" style="left:13.5px;top:725.5px;width:1067.5px;height:1.5px;background:#000"></div>
<div class="a" style="left:13.5px;top:749px;width:137.5px;height:1.5px;background:#000"></div>
<div class="a" style="left:151px;top:748.5px;width:930px;height:1.5px;background:#a0a0a0"></div>
<div class="a" style="left:274.6px;top:645.5px;width:1.6px;height:23px;background:#000"></div>
<div class="a" style="left:274.6px;top:726px;width:1.6px;height:23px;background:#000"></div>
<div class="a" style="left:401px;top:645.5px;width:1.6px;height:23px;background:#000"></div>
<div class="a" style="left:401px;top:726px;width:1.6px;height:23px;background:#000"></div>
<div class="a" style="left:496.2px;top:645.5px;width:1.6px;height:23px;background:#000"></div>
<div class="a" style="left:496.2px;top:726px;width:1.6px;height:23px;background:#000"></div>
<div class="a" style="left:621px;top:645.5px;width:1.6px;height:23px;background:#000"></div>
<div class="a" style="left:621px;top:726px;width:1.6px;height:23px;background:#000"></div>
<div class="a" style="left:746.5px;top:645.5px;width:1.6px;height:23px;background:#000"></div>
<div class="a" style="left:746.5px;top:726px;width:1.6px;height:23px;background:#000"></div>
<div class="a" style="left:871.9px;top:645.5px;width:1.6px;height:23px;background:#000"></div>
<div class="a" style="left:871.9px;top:726px;width:1.6px;height:23px;background:#000"></div>
<div class="a" style="left:147.4px;top:645.5px;width:3.6px;height:105px;background:#000"></div>
<span class="t" style="left:16.4px;top:650.88px;font-size:15.5px;color:#000;transform:scaleX(0.9742);">Código do Serviço</span>
<span class="t" style="left:173.8px;top:650.88px;font-size:15.5px;color:#000;transform:scaleX(0.9820);">Valor Serviços</span>
<span class="t" style="left:289px;top:650.88px;font-size:15.5px;color:#000;transform:scaleX(0.9480);">Base de Cálculo</span>
<span class="t" style="left:434px;top:650.88px;font-size:15.5px;color:#000;transform:scaleX(1.0019);">Alíquota</span>
<span class="t" style="left:520.8px;top:650.88px;font-size:15.5px;color:#000;transform:scaleX(0.9606);">Vlr.ISS Devido</span>
<span class="t" style="left:653.5px;top:650.88px;font-size:15.5px;color:#000;transform:scaleX(0.9121);">Oper.sem ISS</span>
<span class="t" style="left:764px;top:650.88px;font-size:15.5px;color:#000;transform:scaleX(0.9893);">Subempreitada</span>
<span class="t" style="left:1014px;top:650.88px;font-size:15.5px;color:#000;transform:scaleX(1.0017);">Materiais</span>
<span class="t" style="left:16.4px;top:730.38px;font-size:15.5px;color:#000;transform:scaleX(1.0687);">Total</span>
<div class="a" style="left:151px;top:750.5px;width:930px;height:23.5px;background:#f5f5f5"></div>
<div class="a" style="left:151px;top:750.5px;width:23px;height:23.5px;background:#f0f0f0;box-shadow:inset 1.5px 1.5px #fff,inset -2.2px -2.2px #6d6d6d;"></div>
<div class="a" style="left:158px;top:756.5px;width:0;height:0;border-top:6px solid transparent;border-bottom:6px solid transparent;border-right:6px solid #000"></div>
<div class="a" style="left:175px;top:750.5px;width:33px;height:23.5px;background:#f0f0f0;box-shadow:inset 1.5px 1.5px #fff,inset -2.2px -2.2px #6d6d6d;"></div>
<div class="a" style="left:1057.7px;top:749.5px;width:23px;height:24.5px;background:#f0f0f0;box-shadow:inset 1.5px 1.5px #fff,inset -2.2px -2.2px #6d6d6d;"></div>
<div class="a" style="left:1066px;top:756px;width:0;height:0;border-top:6px solid transparent;border-bottom:6px solid transparent;border-left:6px solid #000"></div>
<div class="a" style="left:1087.4px;top:651px;width:39.5px;height:32.2px;background:#f0f0f0;box-shadow:inset 1.5px 1.5px #fff,inset -2.2px -2.2px #6d6d6d;"></div>
<svg class="a" style="left:1087px;top:650px" width="40" height="30" viewBox="1087 650 40 30"><path d="M1104.4 653h5.8v9.1h8.6v5.4h-8.6V676h-5.8v-8.5h-8.6v-5.4h8.6z" fill="#0000e6"/></svg>
<div class="a" style="left:1087.4px;top:710.6px;width:39.5px;height:31.7px;background:#f0f0f0;box-shadow:inset 1.5px 1.5px #fff,inset -2.2px -2.2px #6d6d6d;"></div>
<svg class="a" style="left:1087px;top:710px" width="40" height="32" viewBox="1087 710 40 32">
<path d="M1097 728.5 L1112.5 713.5 L1117.5 718.5 L1102 733.5 Z" fill="#d01818" stroke="#3a0000" stroke-width="0.9"/>
<path d="M1099.5 731 L1115 716" stroke="#400000" stroke-width="1.6"/>
<path d="M1112.5 713.5 L1117.5 718.5 L1116 720 L1111 715z" fill="#f0a0a0"/>
<path d="M1097 728.5 L1102 733.5 L1096 734.5 Z" fill="#e8b030" stroke="#3a0000" stroke-width="0.8"/>
<path d="M1096 731.7 C1098 735 1101 736.5 1104 735.9 C1107 735 1108.5 731.7 1111 731.7 H1118.3" stroke="#1a2a9a" stroke-width="1.4" fill="none"/>
</svg>
<div class="a" style="left:1087.4px;top:743.7px;width:39.5px;height:31.2px;background:#f0f0f0;box-shadow:inset 1.5px 1.5px #fff,inset -2.2px -2.2px #6d6d6d;"></div>
<div class="a" style="left:1096.1px;top:754.4px;width:22.8px;height:5.4px;background:#f00000"></div>
<div class="a" style="left:4px;top:798.5px;width:1148px;height:38px;background:#f0f0f0"></div>
<div class="a" style="left:4px;top:803px;width:1148px;height:1px;background:#fafafa"></div>
<div class="a" style="left:1.7px;top:807.5px;width:95.5px;height:30px;box-shadow:inset 1px 1px #a0a0a0,inset -1px 0 #fff"></div>
<span class="t" style="left:9.7px;top:815.48px;font-size:15.5px;color:#000;transform:scaleX(1.0312);">24/09/2025</span>
<div class="a" style="left:100.7px;top:807.5px;width:48px;height:30px;box-shadow:inset 1px 1px #a0a0a0,inset -1px 0 #fff"></div>
<span class="t" style="left:105.9px;top:815.48px;font-size:15.5px;color:#000;transform:scaleX(0.9795);">14:58</span>
<div class="a" style="left:152.8px;top:807.5px;width:26px;height:30px;box-shadow:inset 1px 1px #a0a0a0,inset -1px 0 #fff"></div>
<div class="a" style="left:183.3px;top:807.5px;width:747.6px;height:30px;box-shadow:inset 1px 1px #a0a0a0,inset -1px 0 #fff"></div>
<div class="a" style="left:934.6px;top:807.5px;width:26px;height:30px;box-shadow:inset 1px 1px #a0a0a0,inset -1px 0 #fff"></div>
<div class="a" style="left:965px;top:807.5px;width:160px;height:30px;box-shadow:inset 1px 1px #a0a0a0,inset -1px 0 #fff"></div>
<span class="t" style="left:969.7px;top:815.18px;font-size:15.5px;color:#000;transform:scaleX(1.0054);">Modelo 51 - Prosoft</span>
<svg class="a" style="left:1130px;top:815px" width="22" height="21" viewBox="0 0 22 21"><path d="M22 5L6 21M22 11L12 21M22 17L18 21" stroke="#a0a0a0" stroke-width="1.8"/></svg>
</body></html>
